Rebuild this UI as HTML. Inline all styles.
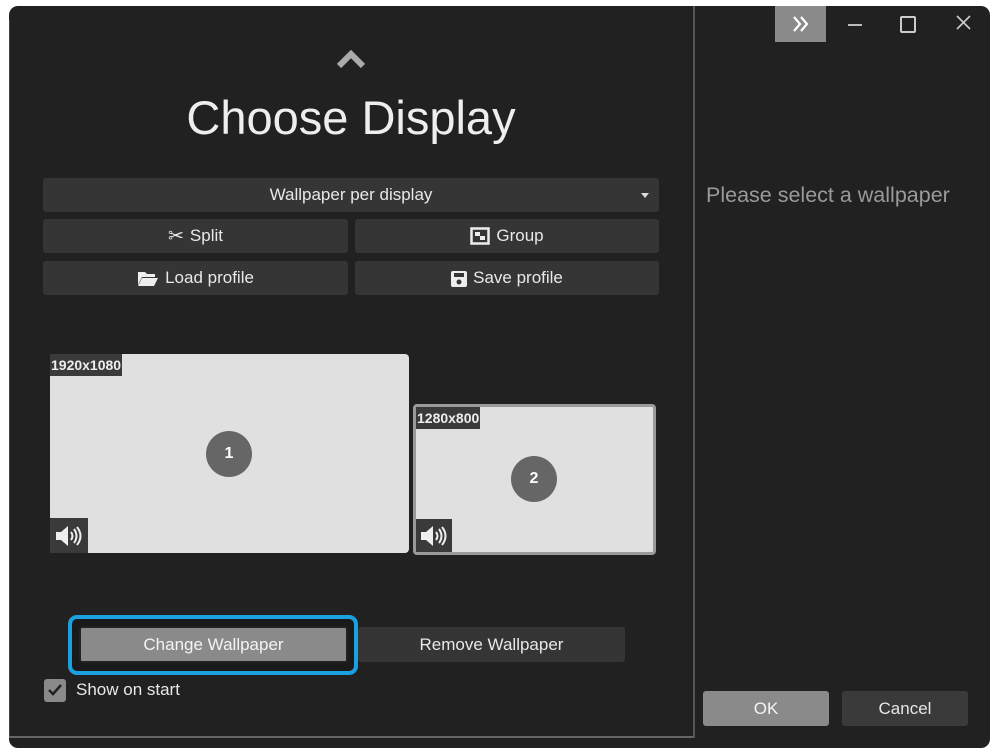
<!DOCTYPE html>
<html><head><style>
*{margin:0;padding:0;box-sizing:border-box}
body{width:996px;height:755px;background:#fff;position:relative;overflow:hidden;font-family:"Liberation Sans",sans-serif}
.a{position:absolute}
.win{left:9px;top:6px;width:981px;height:742px;background:#212121;border-radius:9px}
.btn{position:absolute;background:#353535;color:#e8e8e8;font-size:17px;display:flex;align-items:center;justify-content:center;border-radius:3px;gap:6px}
.disp{position:absolute;background:#e0e0e0}
.lbl{position:absolute;left:0;top:0;background:#3a3a3a;color:#eee;font-weight:bold;font-size:14px;padding:3px 1px;line-height:16px}
.circ{position:absolute;width:46px;height:46px;border-radius:50%;background:#666;color:#fff;font-weight:bold;font-size:16px;display:flex;align-items:center;justify-content:center}
.spk{position:absolute;left:0;bottom:0;width:38px;height:35px;background:#3a3a3a;display:flex;align-items:center;justify-content:center}
</style></head><body>
<div class="a win"></div>
<div class="a" style="left:9px;top:20px;width:1px;height:718px;background:#444"></div>
<div class="a" style="left:9px;top:736px;width:686px;height:2px;background:#666"></div>
<div class="a" style="left:693px;top:6px;width:2px;height:732px;background:#555"></div>

<svg class="a" style="left:336px;top:50px" width="30" height="18" viewBox="0 0 30 18"><path d="M3 16 L15 4 L27 16" stroke="#aaa" stroke-width="6" fill="none" stroke-linejoin="miter"/></svg>
<div class="a" style="left:0;width:702px;top:88px;text-align:center;color:#eee;font-size:47px;line-height:60px">Choose Display</div>

<div class="btn" style="left:43px;top:178px;width:616px;height:34px">Wallpaper per display</div>
<div class="a" style="left:641px;top:193px;width:0;height:0;border-left:4px solid transparent;border-right:4px solid transparent;border-top:5px solid #ddd"></div>
<div class="btn" style="left:43px;top:219px;width:305px;height:34px"><span style="font-size:19px">✂</span>Split</div>
<div class="btn" style="left:355px;top:219px;width:304px;height:34px"><svg width="20" height="18"><rect x="1.5" y="1.5" width="17" height="15" fill="none" stroke="#eee" stroke-width="2.5"/><rect x="5" y="5" width="5" height="4" fill="#eee"/><rect x="10" y="9" width="5" height="4" fill="#eee"/></svg>Group</div>
<div class="btn" style="left:43px;top:261px;width:305px;height:34px"><svg width="22" height="17"><path d="M1 2h7l2 2h8v3H5L1 15z" fill="#eee"/><path d="M5 8h16l-4 8H1z" fill="#eee"/></svg>Load profile</div>
<div class="btn" style="left:355px;top:261px;width:304px;height:34px"><svg width="16" height="17"><rect x="0" y="1" width="16" height="16" rx="2" fill="#eee"/><rect x="3" y="3" width="10" height="4" fill="#353535"/><circle cx="8" cy="12" r="2.5" fill="#353535"/></svg>Save profile</div>

<div class="disp" style="left:50px;top:354px;width:359px;height:199px;border-radius:4px">
 <div class="lbl">1920x1080</div>
 <div class="circ" style="left:156px;top:77px">1</div>
 <div class="spk"><svg width="30" height="22"><path d="M2 7h5l7-6v20l-7-6H2z" fill="#eee"/><path d="M17 7q3 4 0 8M20 4q5 7 0 14M23 2q7 9 0 18" stroke="#eee" stroke-width="2" fill="none"/></svg></div>
</div>
<div class="disp" style="left:413px;top:404px;width:243px;height:151px;border:3px solid #9a9a9a;border-radius:4px">
 <div class="lbl">1280x800</div>
 <div class="circ" style="left:95px;top:49px">2</div>
 <div class="spk" style="width:36px;height:33px"><svg width="30" height="22"><path d="M2 7h5l7-6v20l-7-6H2z" fill="#eee"/><path d="M17 7q3 4 0 8M20 4q5 7 0 14M23 2q7 9 0 18" stroke="#eee" stroke-width="2" fill="none"/></svg></div>
</div>

<div class="a" style="left:68px;top:615px;width:290px;height:60px;border:4px solid #1ba1e2;border-radius:9px;background:#1a1a1a"></div>
<div class="btn" style="left:79px;top:626px;width:269px;height:37px;background:#8a8a8a;border:2px solid #222;border-radius:3px;color:#f4f4f4">Change Wallpaper</div>
<div class="btn" style="left:358px;top:627px;width:267px;height:35px;background:#353535">Remove Wallpaper</div>

<div class="a" style="left:44px;top:679px;width:22px;height:23px;background:#8a8a8a;border-radius:3px"><svg width="22" height="23"><path d="M5 11l4 4 8-9" stroke="#222" stroke-width="2.5" fill="none"/></svg></div>
<div class="a" style="left:76px;top:680px;color:#e8e8e8;font-size:17px;line-height:20px">Show on start</div>

<div class="a" style="left:775px;top:6px;width:51px;height:36px;background:#8a8a8a;color:#fff;font-size:22px;display:flex;align-items:center;justify-content:center"><svg width="20" height="18"><path d="M3 2l6 7-6 7M10 2l6 7-6 7" stroke="#fff" stroke-width="2.2" fill="none"/></svg></div>
<div class="a" style="left:848px;top:24px;width:14px;height:2px;background:#bbb"></div>
<div class="a" style="left:900px;top:16px;width:16px;height:17px;border:2px solid #ccc;border-radius:2px"></div>
<svg class="a" style="left:956px;top:15px" width="15" height="15"><path d="M1 1l13 13M14 1L1 14" stroke="#ccc" stroke-width="1.6"/></svg>

<div class="a" style="left:706px;top:182px;color:#9a9a9a;font-size:21.5px;line-height:26px;white-space:nowrap">Please select a wallpaper</div>
<div class="btn" style="left:703px;top:691px;width:126px;height:35px;background:#8a8a8a;color:#f4f4f4">OK</div>
<div class="btn" style="left:842px;top:691px;width:126px;height:35px;background:#3a3a3a">Cancel</div>
</body></html>
